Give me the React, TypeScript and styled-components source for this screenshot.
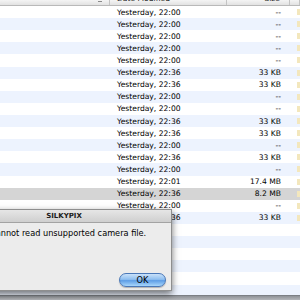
import styled, { createGlobalStyle } from "styled-components";

const GlobalStyle = createGlobalStyle`
  html, body {
    margin: 0;
    padding: 0;
    width: 300px;
    height: 300px;
    overflow: hidden;
    background: #ffffff;
  }
  body {
    font-family: "DejaVu Sans", "Noto Sans", sans-serif;
  }
`;

const Screen = styled.div`
  position: relative;
  width: 300px;
  height: 300px;
  overflow: hidden;
  display: flex;
  flex-direction: column;
`;

const COLS = "110px 117px 63px 10px";

const Header = styled.div`
  display: grid;
  grid-template-columns: ${COLS};
  height: 6px;
  overflow: hidden;
  background: linear-gradient(#f4f4f4, #e2e2e2);
  border-bottom: 1px solid #b9b9b9;
  box-sizing: border-box;
  flex-shrink: 0;
`;

const HeadCell = styled.div<{ $align?: "left" | "right" }>`
  border-right: 1px solid #c4c4c4;
  font-size: 7.6px;
  line-height: 10px;
  margin-top: -6px;
  color: #1a1a1a;
  white-space: nowrap;
  overflow: hidden;
  text-align: ${(p) => p.$align ?? "left"};
  padding: 0 ${(p) => (p.$align === "right" ? "9px" : "0")} 0 ${(p) => (p.$align === "right" ? "0" : "7px")};
  position: relative;
`;

const SortMark = styled.span`
  position: absolute;
  right: 7px;
  top: 7px;
  width: 4px;
  height: 1px;
  background: #8a8a8a;
`;

const List = styled.div`
  flex: 1;
  display: flex;
  flex-direction: column;
  overflow: hidden;
`;

const Row = styled.div<{ $stripe: boolean; $selected?: boolean }>`
  display: grid;
  grid-template-columns: ${COLS};
  height: 12.12px;
  flex-shrink: 0;
  align-items: center;
  font-size: 7.6px;
  color: #000;
  background: ${(p) => (p.$selected ? "#d5d5d5" : p.$stripe ? "#edf3fe" : "#ffffff")};
`;

const NameCell = styled.div``;

const DateCell = styled.div`
  padding-left: 7px;
  white-space: nowrap;
`;

const SizeCell = styled.div`
  text-align: right;
  padding-right: 9px;
  white-space: nowrap;
`;

const KindCell = styled.div`
  display: flex;
  justify-content: flex-end;
`;

const KindMark = styled.span`
  width: 3px;
  height: 6px;
  background: #f3e7bd;
`;

const BottomBar = styled.div`
  height: 4px;
  flex-shrink: 0;
  background: linear-gradient(#8f9297, #b4b6ba);
  border-top: 1px solid #7c7f84;
`;

const Dialog = styled.div`
  position: absolute;
  left: -44px;
  top: 209px;
  width: 216px;
  height: 82px;
  background: #ececec;
  border: 1px solid #8e8e8e;
  box-sizing: border-box;
  box-shadow: 0 3px 7px rgba(0, 0, 0, 0.55);
  display: flex;
  flex-direction: column;
`;

const TitleBar = styled.div`
  height: 13px;
  flex-shrink: 0;
  background: linear-gradient(#e6e6e6, #cfcfcf);
  border-bottom: 1px solid #a3a3a3;
  box-sizing: border-box;
  display: flex;
  align-items: center;
  justify-content: center;
  font-size: 7px;
  font-weight: bold;
  color: #1a1a1a;
`;

const Body = styled.div`
  flex: 1;
  display: flex;
  flex-direction: column;
  padding: 5px 5px 3px 33px;
`;

const Message = styled.div`
  font-size: 8.2px;
  color: #000;
  white-space: nowrap;
`;

const Actions = styled.div`
  margin-top: auto;
  display: flex;
  justify-content: flex-end;
`;

const OkButton = styled.button`
  width: 47px;
  height: 14px;
  border-radius: 7px;
  border: 1px solid #4a78b8;
  background: linear-gradient(#c9e1f9 0%, #8fbff0 45%, #5e9ee6 55%, #a8d6fb 100%);
  font-family: "DejaVu Sans", sans-serif;
  font-size: 8.2px;
  color: #000;
  padding: 0;
  display: flex;
  align-items: center;
  justify-content: center;
  box-shadow: 0 1px 1px rgba(0, 0, 0, 0.25);
`;

type Item = { time: string; size: string };

const items: Item[] = [
  { time: "22:00", size: "--" },
  { time: "22:00", size: "--" },
  { time: "22:00", size: "--" },
  { time: "22:00", size: "--" },
  { time: "22:00", size: "--" },
  { time: "22:36", size: "33 KB" },
  { time: "22:36", size: "33 KB" },
  { time: "22:00", size: "--" },
  { time: "22:00", size: "--" },
  { time: "22:36", size: "33 KB" },
  { time: "22:36", size: "33 KB" },
  { time: "22:00", size: "--" },
  { time: "22:36", size: "33 KB" },
  { time: "22:00", size: "--" },
  { time: "22:01", size: "17.4 MB" },
  { time: "22:36", size: "8.2 MB" },
  { time: "22:00", size: "--" },
  { time: "22:36", size: "33 KB" },
];

const SELECTED = 15;
const TOTAL_ROWS = 24;

export default function App() {
  const rows = Array.from({ length: TOTAL_ROWS }, (_, i) => items[i]);
  return (
    <Screen>
      <GlobalStyle />
      <Header>
        <HeadCell>
          <SortMark />
        </HeadCell>
        <HeadCell>Date Modified</HeadCell>
        <HeadCell $align="right">Size</HeadCell>
        <HeadCell />
      </Header>
      <List>
        {rows.map((it, i) => (
          <Row key={i} $stripe={i % 2 === 1} $selected={i === SELECTED}>
            <NameCell />
            <DateCell>{it ? `Yesterday, ${it.time}` : ""}</DateCell>
            <SizeCell>{it ? it.size : ""}</SizeCell>
            <KindCell>{it && <KindMark />}</KindCell>
          </Row>
        ))}
      </List>
      <BottomBar />
      <Dialog>
        <TitleBar>SILKYPIX</TitleBar>
        <Body>
          <Message>Cannot read unsupported camera file.</Message>
          <Actions>
            <OkButton>OK</OkButton>
          </Actions>
        </Body>
      </Dialog>
    </Screen>
  );
}
